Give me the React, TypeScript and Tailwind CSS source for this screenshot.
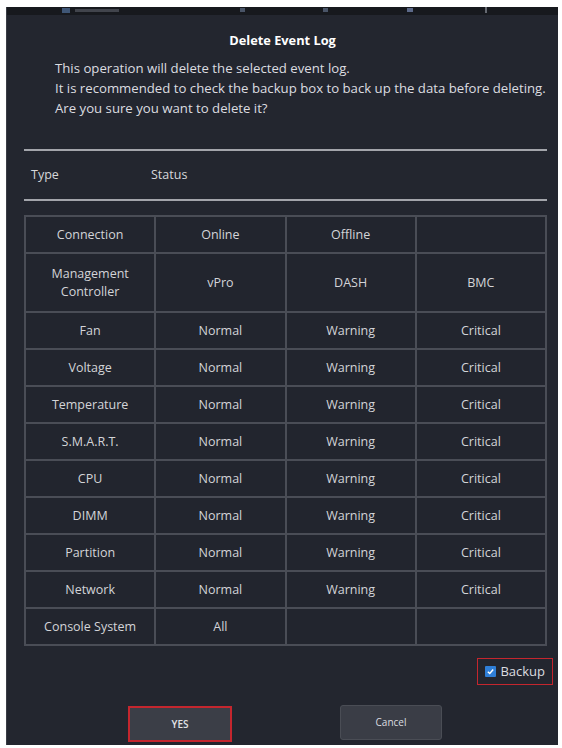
import React from 'react';

// Rows of the status filter table
const rows: { type: string; cells: string[]; tall?: boolean }[] = [
  { type: 'Connection', cells: ['Online', 'Offline', ''] },
  { type: 'Management\nController', cells: ['vPro', 'DASH', 'BMC'], tall: true },
  { type: 'Fan', cells: ['Normal', 'Warning', 'Critical'] },
  { type: 'Voltage', cells: ['Normal', 'Warning', 'Critical'] },
  { type: 'Temperature', cells: ['Normal', 'Warning', 'Critical'] },
  { type: 'S.M.A.R.T.', cells: ['Normal', 'Warning', 'Critical'] },
  { type: 'CPU', cells: ['Normal', 'Warning', 'Critical'] },
  { type: 'DIMM', cells: ['Normal', 'Warning', 'Critical'] },
  { type: 'Partition', cells: ['Normal', 'Warning', 'Critical'] },
  { type: 'Network', cells: ['Normal', 'Warning', 'Critical'] },
  { type: 'Console System', cells: ['All', '', ''] },
];

const Cell: React.FC<{ text: string; tall?: boolean }> = ({ text, tall }) => (
  <div
    className={`flex items-center justify-center bg-[#22252e] text-center text-[12.5px] leading-[18px] text-[#d3d4d8] whitespace-pre-line ${
      tall ? 'h-[57px]' : 'h-[35px]'
    }`}
  >
    {text}
  </div>
);

export default function App() {
  return (
    <div
      className="w-[562px] h-[748px] bg-white pt-[7px] pl-[6px] pr-[4px] pb-[3px]"
      style={{ fontFamily: '"Open Sans", "Noto Sans", sans-serif' }}
    >
      <div className="h-full flex flex-col bg-[#23262f] border-l border-[#3a3d45]">
        {/* window behind, cut off at the top */}
        <div className="relative h-[8px] bg-[#17191e] shrink-0">
          <div className="absolute left-[55px] top-[1px] h-[5px] w-[8px] bg-[#5a7fb0] opacity-60" />
          <div className="absolute left-[68px] top-[2px] h-[3px] w-[44px] bg-[#6c707a] opacity-50" />
          <div className="absolute left-[233px] top-[1px] h-[4px] w-[5px] bg-[#7c8fb0] opacity-50" />
          <div className="absolute left-[316px] top-[1px] h-[4px] w-[5px] bg-[#7c8fb0] opacity-50" />
          <div className="absolute left-[400px] top-[1px] h-[4px] w-[6px] bg-[#8a9fd0] opacity-60" />
          <div className="absolute left-[478px] top-[0px] h-[6px] w-[2px] bg-[#9a9ea8] opacity-60" />
        </div>

        <div className="pt-[17px] text-center text-[12.8px] leading-[16px] font-bold text-white">
          Delete Event Log
        </div>

        <div className="mt-[10px] pl-[48px] text-[13.2px] leading-[20px] text-[#dcdde0]">
          <p>This operation will delete the selected event log.</p>
          <p>It is recommended to check the backup box to back up the data before deleting.</p>
          <p>Are you sure you want to delete it?</p>
        </div>

        <div className="pl-[17px] pr-[11px]">
          <div className="mt-[31px] h-[2px] bg-[#a3a5ab]" />
          <div className="flex items-center h-[48px] text-[12.5px] text-[#d6d7da]">
            <span className="pl-[7px] w-[127px]">Type</span>
            <span>Status</span>
          </div>
          <div className="h-[2px] bg-[#a3a5ab]" />

          <div className="mt-[14px] grid grid-cols-4 gap-[2px] bg-[#4a4d56] p-[2px]">
            {rows.map((r) => (
              <React.Fragment key={r.type}>
                <Cell text={r.type} tall={r.tall} />
                {r.cells.map((c, i) => (
                  <Cell key={i} text={c} tall={r.tall} />
                ))}
              </React.Fragment>
            ))}
          </div>

          <div className="mt-[12px] flex justify-end -mr-[6px]">
            <label className="flex items-center gap-[4px] h-[27px] px-[7px] border-[1.5px] border-[#c4262e] text-[13px] text-[#dcdde0]">
              <span className="flex items-center justify-center w-[11px] h-[11px] bg-[#2f7fd8] rounded-[1px]">
                <svg viewBox="0 0 10 10" className="w-[9px] h-[9px]">
                  <path d="M2 5.2 L4.2 7.3 L8 2.8" fill="none" stroke="#ffffff" strokeWidth="1.6" />
                </svg>
              </span>
              Backup
            </label>
          </div>

          <div className="mt-[21px] flex">
            <button className="ml-[104px] w-[104px] h-[36px] border-2 border-[#c4262e] bg-[#3b3e47] text-[10px] font-semibold text-[#e2e3e6]">
              YES
            </button>
            <button className="ml-[108px] -mt-[1px] w-[102px] h-[35px] rounded-[3px] border border-[#4a4d55] bg-[#3a3d46] text-[10px] text-[#dcdde0]">
              Cancel
            </button>
          </div>
        </div>
      </div>
    </div>
  );
}
